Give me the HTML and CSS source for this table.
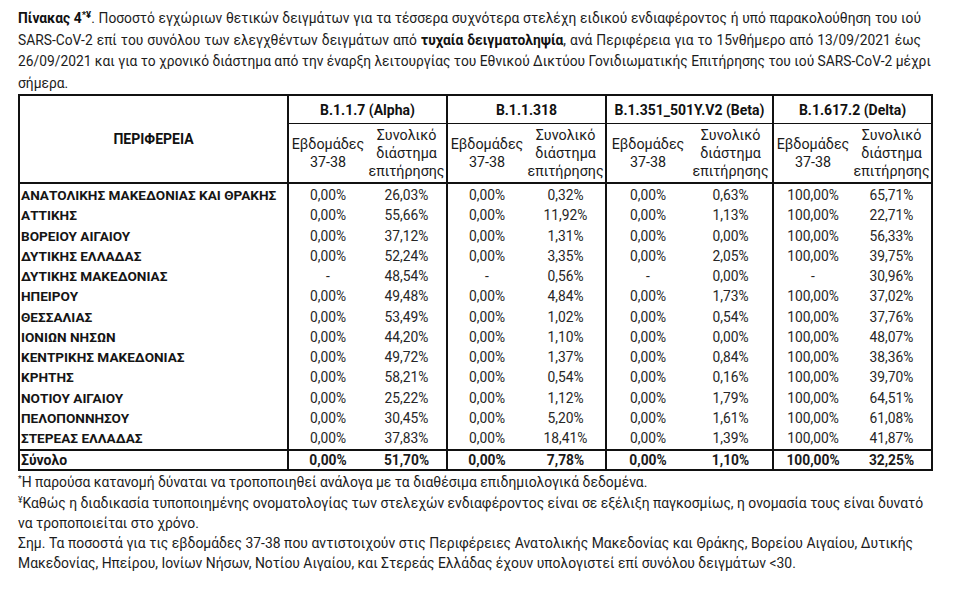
FILE: index.html
```html
<!DOCTYPE html>
<html lang="el">
<head>
<meta charset="utf-8">
<title>Πίνακας 4</title>
<link rel="stylesheet" href="styles.css">
</head>
<body>
<div class="page">
  <p class="caption">
    <span class="line just"><b>Πίνακας 4<sup>*¥</sup></b>. Ποσοστό εγχώριων θετικών δειγμάτων για τα τέσσερα συχνότερα στελέχη ειδικού ενδιαφέροντος ή υπό παρακολούθηση του ιού</span>
    <span class="line just">SARS-CoV-2 επί του συνόλου των ελεγχθέντων δειγμάτων από <b>τυχαία δειγματοληψία</b>, ανά Περιφέρεια για το 15νθήμερο από 13/09/2021 έως</span>
    <span class="line just">26/09/2021 και για το χρονικό διάστημα από την έναρξη λειτουργίας του Εθνικού Δικτύου Γονιδιωματικής Επιτήρησης του ιού SARS-CoV-2 μέχρι</span>
    <span class="line">σήμερα.</span>
  </p>
  <table class="data">
    <colgroup>
      <col class="c-reg">
      <col class="c-a"><col class="c-b">
      <col class="c-a"><col class="c-b">
      <col class="c-c"><col class="c-d">
      <col class="c-a"><col class="c-b">
    </colgroup>
    <thead>
      <tr class="h1">
        <th rowspan="2" class="reg-h">ΠΕΡΙΦΕΡΕΙΑ</th>
        <th colspan="2" class="grp">B.1.1.7 (Alpha)</th>
        <th colspan="2" class="grp">B.1.1.318</th>
        <th colspan="2" class="grp">B.1.351_501Y.V2 (Beta)</th>
        <th colspan="2" class="grp">B.1.617.2 (Delta)</th>
      </tr>
      <tr class="h2">
        <th class="gs">Εβδομάδες<br>37-38</th><th>Συνολικό<br>διάστημα<br>επιτήρησης</th>
        <th class="gs">Εβδομάδες<br>37-38</th><th>Συνολικό<br>διάστημα<br>επιτήρησης</th>
        <th class="gs">Εβδομάδες<br>37-38</th><th>Συνολικό<br>διάστημα<br>επιτήρησης</th>
        <th class="gs">Εβδομάδες<br>37-38</th><th>Συνολικό<br>διάστημα<br>επιτήρησης</th>
      </tr>
    </thead>
    <tbody>
      <tr class="first"><td class="reg">ΑΝΑΤΟΛΙΚΗΣ ΜΑΚΕΔΟΝΙΑΣ ΚΑΙ ΘΡΑΚΗΣ</td><td class="gs">0,00%</td><td>26,03%</td><td class="gs">0,00%</td><td>0,32%</td><td class="gs">0,00%</td><td>0,63%</td><td class="gs">100,00%</td><td>65,71%</td></tr>
      <tr><td class="reg">ΑΤΤΙΚΗΣ</td><td class="gs">0,00%</td><td>55,66%</td><td class="gs">0,00%</td><td>11,92%</td><td class="gs">0,00%</td><td>1,13%</td><td class="gs">100,00%</td><td>22,71%</td></tr>
      <tr><td class="reg">ΒΟΡΕΙΟΥ ΑΙΓΑΙΟΥ</td><td class="gs">0,00%</td><td>37,12%</td><td class="gs">0,00%</td><td>1,31%</td><td class="gs">0,00%</td><td>0,00%</td><td class="gs">100,00%</td><td>56,33%</td></tr>
      <tr><td class="reg">ΔΥΤΙΚΗΣ ΕΛΛΑΔΑΣ</td><td class="gs">0,00%</td><td>52,24%</td><td class="gs">0,00%</td><td>3,35%</td><td class="gs">0,00%</td><td>2,05%</td><td class="gs">100,00%</td><td>39,75%</td></tr>
      <tr><td class="reg">ΔΥΤΙΚΗΣ ΜΑΚΕΔΟΝΙΑΣ</td><td class="gs">-</td><td>48,54%</td><td class="gs">-</td><td>0,56%</td><td class="gs">-</td><td>0,00%</td><td class="gs">-</td><td>30,96%</td></tr>
      <tr><td class="reg">ΗΠΕΙΡΟΥ</td><td class="gs">0,00%</td><td>49,48%</td><td class="gs">0,00%</td><td>4,84%</td><td class="gs">0,00%</td><td>1,73%</td><td class="gs">100,00%</td><td>37,02%</td></tr>
      <tr><td class="reg">ΘΕΣΣΑΛΙΑΣ</td><td class="gs">0,00%</td><td>53,49%</td><td class="gs">0,00%</td><td>1,02%</td><td class="gs">0,00%</td><td>0,54%</td><td class="gs">100,00%</td><td>37,76%</td></tr>
      <tr><td class="reg">ΙΟΝΙΩΝ ΝΗΣΩΝ</td><td class="gs">0,00%</td><td>44,20%</td><td class="gs">0,00%</td><td>1,10%</td><td class="gs">0,00%</td><td>0,00%</td><td class="gs">100,00%</td><td>48,07%</td></tr>
      <tr><td class="reg">ΚΕΝΤΡΙΚΗΣ ΜΑΚΕΔΟΝΙΑΣ</td><td class="gs">0,00%</td><td>49,72%</td><td class="gs">0,00%</td><td>1,37%</td><td class="gs">0,00%</td><td>0,84%</td><td class="gs">100,00%</td><td>38,36%</td></tr>
      <tr><td class="reg">ΚΡΗΤΗΣ</td><td class="gs">0,00%</td><td>58,21%</td><td class="gs">0,00%</td><td>0,54%</td><td class="gs">0,00%</td><td>0,16%</td><td class="gs">100,00%</td><td>39,70%</td></tr>
      <tr><td class="reg">ΝΟΤΙΟΥ ΑΙΓΑΙΟΥ</td><td class="gs">0,00%</td><td>25,22%</td><td class="gs">0,00%</td><td>1,12%</td><td class="gs">0,00%</td><td>1,79%</td><td class="gs">100,00%</td><td>64,51%</td></tr>
      <tr><td class="reg">ΠΕΛΟΠΟΝΝΗΣΟΥ</td><td class="gs">0,00%</td><td>30,45%</td><td class="gs">0,00%</td><td>5,20%</td><td class="gs">0,00%</td><td>1,61%</td><td class="gs">100,00%</td><td>61,08%</td></tr>
      <tr class="last"><td class="reg">ΣΤΕΡΕΑΣ ΕΛΛΑΔΑΣ</td><td class="gs">0,00%</td><td>37,83%</td><td class="gs">0,00%</td><td>18,41%</td><td class="gs">0,00%</td><td>1,39%</td><td class="gs">100,00%</td><td>41,87%</td></tr>
      <tr class="total"><td class="reg">Σύνολο</td><td class="gs">0,00%</td><td>51,70%</td><td class="gs">0,00%</td><td>7,78%</td><td class="gs">0,00%</td><td>1,10%</td><td class="gs">100,00%</td><td>32,25%</td></tr>
    </tbody>
  </table>
  <div class="notes">
    <span class="line"><sup class="mark">*</sup>Η παρούσα κατανομή δύναται να τροποποιηθεί ανάλογα με τα διαθέσιμα επιδημιολογικά δεδομένα.</span>
    <span class="line just"><sup class="mark">¥</sup>Καθώς η διαδικασία τυποποιημένης ονοματολογίας των στελεχών ενδιαφέροντος είναι σε εξέλιξη παγκοσμίως, η ονομασία τους είναι δυνατό</span>
    <span class="line">να τροποποιείται στο χρόνο.</span>
    <span class="line just">Σημ. Τα ποσοστά για τις εβδομάδες 37-38 που αντιστοιχούν στις Περιφέρειες Ανατολικής Μακεδονίας και Θράκης, Βορείου Αιγαίου, Δυτικής</span>
    <span class="line">Μακεδονίας, Ηπείρου, Ιονίων Νήσων, Νοτίου Αιγαίου, και Στερεάς Ελλάδας έχουν υπολογιστεί επί συνόλου δειγμάτων &lt;30.</span>
  </div>
</div>
</body>
</html>
```

FILE: styles.css
```css
html, body {
  margin: 0;
  padding: 0;
  background: #ffffff;
}

body {
  font-family: Roboto, "Noto Sans", "Liberation Sans", sans-serif;
  color: #1c1c1c;
}

.page {
  width: 960px;
  height: 602px;
  padding: 8px 0 0 18px;
  box-sizing: border-box;
  overflow: hidden;
}

.caption {
  margin: 0;
  width: 903px;
  font-size: 13.8px;
  line-height: 21.5px;
}

.line {
  display: block;
  white-space: nowrap;
}

.line.just {
  text-align: justify;
  text-align-last: justify;
}

.caption b {
  font-weight: 700;
  color: #111;
}

.caption sup {
  font-size: 9.5px;
  line-height: 0;
  vertical-align: 5px;
}

.data {
  border-collapse: collapse;
  table-layout: fixed;
  width: 913px;
  margin-top: 0;
  border: 2px solid #111;
  font-size: 13.8px;
  color: #262626;
}

.c-reg { width: 269px; }
.c-a { width: 79px; }
.c-b { width: 80px; }
.c-c { width: 83px; }
.c-d { width: 84px; }

.data th,
.data td {
  padding: 0;
  text-align: center;
  white-space: nowrap;
}

.data th {
  font-weight: 700;
  color: #111;
}

.h1 th {
  height: 27px;
  font-size: 14px;
}

.reg-h {
  border-right: 2px solid #111;
  border-bottom: 2px solid #111;
}

.grp {
  border-left: 2px solid #111;
  border-right: 2px solid #111;
  border-bottom: 1.5px solid #111;
}

.h2 th {
  height: 58px;
  font-weight: 400;
  font-size: 14.3px;
  line-height: 18px;
  color: #1a1a1a;
  border-bottom: 2px solid #111;
}

.h2 th.gs {
  border-left: 2px solid #111;
}

.data td {
  height: 20.25px;
  line-height: 20px;
}

.data td.gs {
  border-left: 2px solid #111;
}

.data td.reg {
  text-align: left;
  font-weight: 700;
  color: #151515;
  font-size: 13.6px;
  padding-left: 1px;
  border-right: 2px solid #111;
}

.first td {
  padding-top: 1px;
}

.last td {
  padding-bottom: 1px;
}

.total td {
  border-top: 2px solid #111;
  font-weight: 700;
  color: #1a1a1a;
  height: 18px;
  line-height: 18px;
}

.total td.reg {
  font-size: 14px;
}

.notes {
  margin-top: 1px;
  width: 895px;
  font-size: 13.9px;
  line-height: 20.3px;
  color: #1c1c1c;
}

.notes .mark {
  font-size: 8.5px;
  line-height: 0;
  vertical-align: 5px;
}
```
